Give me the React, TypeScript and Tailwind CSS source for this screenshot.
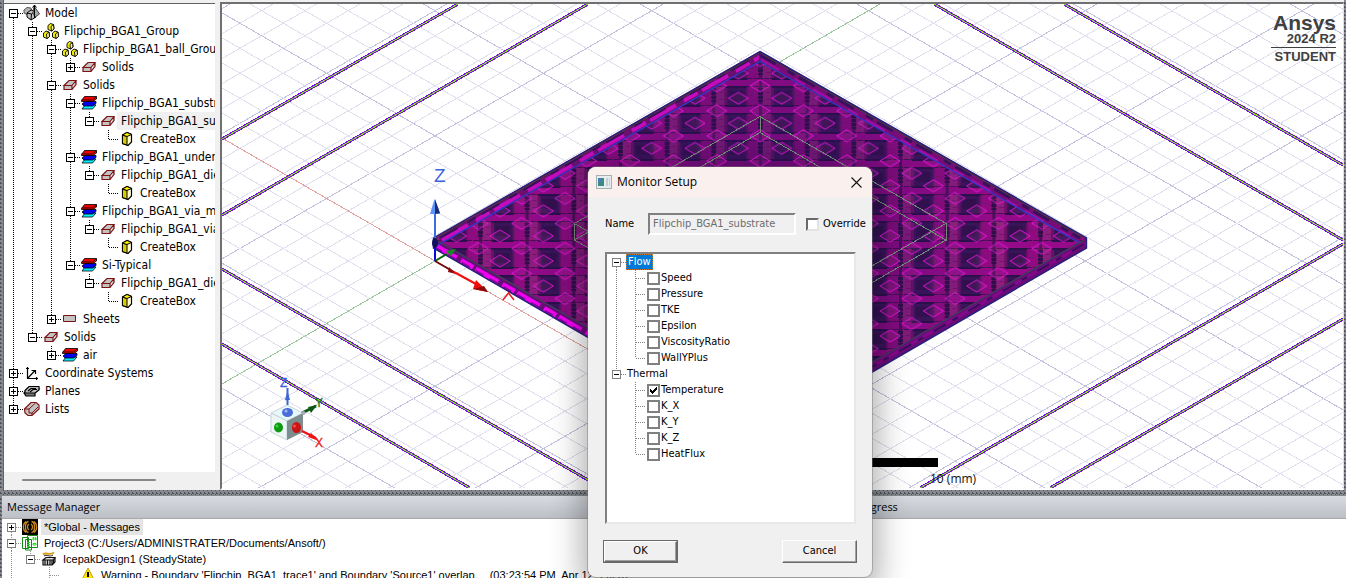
import React, { useId, useState } from "react";

type IconName =
  | "model" | "group" | "solid" | "material" | "box" | "sheet"
  | "axes" | "planes" | "lists" | "global" | "project" | "design" | "warning";

type TreeItem = {
  label: string;
  icon: IconName;
  open?: boolean;
  collapsed?: boolean;
  selected?: boolean;
  children?: TreeItem[];
};

const modelTree: TreeItem[] = [
  {
    label: "Model", icon: "model", open: true, children: [
      {
        label: "Flipchip_BGA1_Group", icon: "group", open: true, children: [
          {
            label: "Flipchip_BGA1_ball_Group", icon: "group", open: true, children: [
              { label: "Solids", icon: "solid", collapsed: true },
            ],
          },
          {
            label: "Solids", icon: "solid", open: true, children: [
              {
                label: "Flipchip_BGA1_substrate", icon: "material", open: true, children: [
                  {
                    label: "Flipchip_BGA1_substrate", icon: "solid", open: true, selected: true,
                    children: [{ label: "CreateBox", icon: "box" }],
                  },
                ],
              },
              {
                label: "Flipchip_BGA1_underfill", icon: "material", open: true, children: [
                  { label: "Flipchip_BGA1_die_underfill", icon: "solid", open: true, children: [{ label: "CreateBox", icon: "box" }] },
                ],
              },
              {
                label: "Flipchip_BGA1_via_material", icon: "material", open: true, children: [
                  { label: "Flipchip_BGA1_via", icon: "solid", open: true, children: [{ label: "CreateBox", icon: "box" }] },
                ],
              },
              {
                label: "Si-Typical", icon: "material", open: true, children: [
                  { label: "Flipchip_BGA1_die", icon: "solid", open: true, children: [{ label: "CreateBox", icon: "box" }] },
                ],
              },
            ],
          },
          { label: "Sheets", icon: "sheet", collapsed: true },
        ],
      },
      {
        label: "Solids", icon: "solid", open: true,
        children: [{ label: "air", icon: "material", collapsed: true }],
      },
    ],
  },
  { label: "Coordinate Systems", icon: "axes", collapsed: true },
  { label: "Planes", icon: "planes", collapsed: true },
  { label: "Lists", icon: "lists", collapsed: true },
];

const BoxGlyph = ({ x, y }: { x: number; y: number }) => (
  <g transform={`translate(${x} ${y})`} stroke="#000" strokeWidth="0.9" strokeLinejoin="round">
    <path d="M0.5 2.5 L3 0.5 L6 1.5 L6.5 6 L4 8 L0.5 6.5 Z" fill="#f4ec00" />
    <path d="M3.5 3.5 L6 1.5 L6.5 6 L4 8 Z" fill="#ffff9c" />
  </g>
);

function Icon({ name }: { name: IconName }) {
  const common = { width: 18, height: 16, viewBox: "0 0 18 16", "aria-hidden": true, className: "shrink-0" } as const;
  switch (name) {
    case "model":
      return (
        <svg {...common}>
          <path d="M1 5 L4 2.500 L8 3 L9 8 L5 10 L1 8 Z" fill="#b4b4b4" stroke="#555" />
          <path d="M4 8 L8 5 L12 6 L13 12 L8 15 L4 12 Z" fill="#c0c0c0" stroke="#000" />
          <path d="M4 8 L8.500 9 L12 6 M8.500 9 L8 15" fill="none" stroke="#000" />
          <path d="M11 1 L16.500 9 L12 12 L10 8 Z" fill="#aaa" stroke="#444" />
          <path d="M11.500 0 V13 M9.500 2.500 L11.500 0 L13.500 2.500" fill="none" stroke="#000" />
        </svg>
      );
    case "group":
      return (
        <svg {...common}>
          <BoxGlyph x={5.500} y={0} /><BoxGlyph x={1} y={7.500} /><BoxGlyph x={10} y={7.500} />
        </svg>
      );
    case "solid":
      return (
        <svg {...common}>
          <path d="M3 8.500 L8 3.500 H15 L11 8.500 Z M3 8.500 V12.500 H11 V8.500 M11 12.500 L15 7.500 V3.500" fill="#c3c3c3" stroke="#7c1212" strokeWidth="1.200" />
        </svg>
      );
    case "material":
      return (
        <svg {...common}>
          <path d="M2 14 L5 10 H16 L12.500 14 Z" fill="#00f0ff" stroke="#000" strokeWidth="0.800" />
          <path d="M2 9 L5 6.500 H16 V8.500 L12.500 11 H4 Z" fill="#0000f0" stroke="#000" strokeWidth="0.800" />
          <path d="M1.500 5.500 L4.500 1.500 H16.500 V4 L13 6.500 H1.500 Z" fill="#f00000" stroke="#000" strokeWidth="0.800" />
          <path d="M1.500 5 H12.500 L16.500 1.500" fill="none" stroke="#000" strokeWidth="0.800" />
        </svg>
      );
    case "box":
      return (
        <svg {...common}>
          <path d="M4.500 4 L9 1.500 L13.500 3.500 V11 L10 14.500 L4.500 12.500 Z" fill="#fffbd0" stroke="#000" strokeWidth="1.200" />
          <path d="M4.500 4 L9 5.500 V14 L4.500 12.500 Z" fill="#d8cc00" stroke="#000" />
          <path d="M4.500 4 L9 1.500 L13.500 3.500 L9 5.500 Z" fill="#fff200" stroke="#000" />
        </svg>
      );
    case "sheet":
      return <svg {...common}><path d="M2.500 4.500 H14.500 V10.500 H2.500 Z" fill="#c3c3c3" stroke="#7c1212" /></svg>;
    case "axes":
      return (
        <svg {...common}>
          <path d="M4.500 2 V13.500 H15 M4.500 13.500 L12 5.500 M3 3.500 H6 M13.500 12 V15 M8.500 5.500 H12.500 V9" fill="none" stroke="#000" strokeWidth="1.200" />
        </svg>
      );
    case "planes":
      return (
        <svg {...common} stroke="#000" strokeWidth="1.200">
          <path d="M1 10 L5 6 H16 L12 10 V13 H3 Z" fill="#777" />
          <path d="M2 7.500 L6 3.500 H16 V7 L12 10 H2 Z" fill="#bbb" />
          <path d="M5 8 L8 5.500 H13 M7 9 L10 6.500 H14" fill="none" />
        </svg>
      );
    case "lists":
      return (
        <svg {...common}>
          <path d="M1.500 8 L8 1.500 H13 L16 4 V8 L9 14.500 H5 L2 12 Z" fill="#c3c3c3" stroke="#7c1212" strokeWidth="1.200" />
          <path d="M2 8 H6 L12.500 2 M6 8 V12 H9 L15 6 M9 12 V14" fill="none" stroke="#7c1212" />
        </svg>
      );
    case "global":
      return (
        <svg {...common}>
          <rect x="1" width="16" height="16" fill="#000" />
          <g fill="none" stroke="#c98a1c" strokeWidth="1.300">
            <path d="M7.500 2.500 C3.500 3 3.500 13 7.500 13.500 M5 2.500 C1.500 5 1.500 11 5 13.500 M8 5 C6 6 6 10 8 11" />
            <path d="M10.500 2.500 C14.500 3 14.500 13 10.500 13.500 M13 2.500 C16.500 5 16.500 11 13 13.500 M10 5 C12 6 12 10 10 11" />
          </g>
        </svg>
      );
    case "project":
      return (
        <svg {...common} fill="#fff" stroke="#138a13">
          <path d="M6.500 0.500 H16.500 V12.500 H6.500 Z M1.500 2.500 H7.500 V13.500 H1.500 Z M4.500 4.500 H10.500 V15 H4.500 Z" />
          <path d="M12 2.500 H13 V5 H12 Z M14.500 2.500 H15 V5 H14.500 Z M12 8.500 H15 V10 H12 Z M6 7.500 H9 M6 9.500 H9 M6 11.500 H9" stroke="#16e016" />
        </svg>
      );
    case "design":
      return (
        <svg {...common} fill="none">
          <path d="M3 3.500 C6 0.500 9 5 14 1.500" stroke="#e09a10" strokeWidth="1.800" />
          <path d="M4 5 C7 3 9 6.500 13 4" stroke="#222" />
          <path d="M3 9 L6 6.500 H15 L13 9 Z M3 9 V14 H12 V9 M12 14 L15 11 V7 M5 9.500 V14 M7.500 9.500 V14 M10 9.500 V14 M13.500 9 V12" fill="#ddd" stroke="#111" strokeWidth="1.200" />
        </svg>
      );
    case "warning":
      return (
        <svg {...common}>
          <path d="M9 1 L16 14.500 H2 Z" fill="#ffe600" stroke="#c9a400" strokeLinejoin="round" />
          <path d="M9 5 V10 M9 11.500 V13.500" stroke="#000" strokeWidth="2" />
        </svg>
      );
  }
}

/** One 19px column of tree connector lines. */
function Connector({ kind, height, color = "#000" }: { kind: "blank" | "pass" | "tee" | "elbow"; height: number; color?: string }) {
  const mid = height / 2;
  return (
    <svg width="19" height={height} className="shrink-0" shapeRendering="crispEdges" aria-hidden="true">
      {kind !== "blank" && (
        <path
          d={
            kind === "pass"
              ? `M9.5 0 V${height}`
              : `M9.5 0 V${kind === "tee" ? height : mid} M10 ${mid + 0.5} H19`
          }
          stroke={color}
          strokeDasharray="1 1"
          fill="none"
        />
      )}
    </svg>
  );
}

function Expander({
  open, first, last, height, color = "#000", box = "#000", onToggle, name,
}: {
  open: boolean; first: boolean; last: boolean; height: number; color?: string; box?: string; onToggle?: () => void; name: string;
}) {
  const m = height / 2;
  return (
    <button type="button" onClick={onToggle} aria-expanded={open} aria-label={name} className="shrink-0">
      <svg width="19" height={height} shapeRendering="crispEdges" className="block" aria-hidden="true">
        <path
          d={`${first ? "" : `M9.5 0 V${m - 4}`} ${last ? "" : `M9.5 ${m + 5} V${height}`} M14 ${m + 0.5} H19`}
          stroke={color} strokeDasharray="1 1" fill="none"
        />
        <rect x="5.500" y={m - 3.5} width="8" height="8" fill="#fff" stroke={box} />
        <path d={`M7 ${m + 0.5} H12 ${open ? "" : `M9.5 ${m - 2} V${m + 3}`}`} stroke="#000" />
      </svg>
    </button>
  );
}

function TreeRows({ items, guides = [] }: { items: TreeItem[]; guides?: boolean[] }) {
  return (
    <ul>
      {items.map((item, i) => (
        <TreeNode key={i} item={item} guides={guides} first={i === 0 && guides.length === 0} last={i === items.length - 1} />
      ))}
    </ul>
  );
}

function TreeNode({ item, guides, first, last }: { item: TreeItem; guides: boolean[]; first: boolean; last: boolean }) {
  const [open, setOpen] = useState(!!item.open);
  return (
    <li>
      <div className="flex h-[18px] items-center whitespace-nowrap">
        {guides.map((on, i) => <Connector key={i} kind={on ? "pass" : "blank"} height={18} />)}
        {item.children || item.collapsed ? (
          <Expander open={open} first={first} last={last} height={18} name={item.label} onToggle={() => item.children && setOpen(!open)} />
        ) : (
          <Connector kind={last ? "elbow" : "tee"} height={18} />
        )}
        <Icon name={item.icon} />
        <span className={`grow pl-1 leading-[18px] ${item.selected ? "bg-[#f0f0f0]" : ""}`}>{item.label}</span>
      </div>
      {open && item.children && <TreeRows items={item.children} guides={[...guides, !last]} />}
    </li>
  );
}

/* ---------- 3D view ---------- */

const OX = 435;
const OY = 261;
const SLOPE = 0.5774;
const STEP = 25.03;

const gridLines = Array.from({ length: 81 }, (_, k) => k - 40).filter((k) => k !== 0);
const x0 = 200;
const x1 = 1360;

const airLines: [number, number, number, number][] = [
  [222, 139, 458, 4], [222, 215, 588, 4], [222, 269, 602, 488], [222, 344, 470, 488],
  [934, 4, 1343, 240], [1064, 4, 1343, 165], [1343, 244, 920, 488], [1343, 319, 1050, 488],
];

function Cuboid() {
  return (
    <g>
      <path d="M271 413 L287 405 L303 413 L287 421 Z" fill="#e6f8fb" stroke="#c4d4da" />
      <path d="M271 413 L287 421 V440 L271 432 Z" fill="#eef5f5" stroke="#c4d4da" />
      <path d="M303 413 L287 421 V440 L303 432 Z" fill="#7d8c8c" />
      <ellipse cx="278.500" cy="427.500" rx="4.500" ry="5" fill="#0b9a12" />
      <circle cx="277" cy="426" r="1.500" fill="#36d63c" />
      <ellipse cx="296.500" cy="427.500" rx="4.500" ry="5.500" fill="#cc1414" />
      <circle cx="294.500" cy="426" r="1.500" fill="#ff4a4a" />
      <ellipse cx="287.500" cy="412.500" rx="5.500" ry="4.500" fill="#4a6cd8" />
      <circle cx="286" cy="411" r="1.500" fill="#a5baf5" />
      <path d="M287.500 405 V388" stroke="#3c64d4" strokeWidth="2" />
      <path d="M285 400 L287.500 391 L290 400 Z" fill="#3c64d4" />
      <path d="M302 413 L316 406" stroke="#0a5a14" strokeWidth="3" />
      <path d="M308 407 L317 405 L311 413 Z" fill="#0a5a14" />
      <circle cx="303.500" cy="413" r="2" fill="#aab" />
      <path d="M302 431 L316 438" stroke="#f01414" strokeWidth="2.500" />
      <path d="M308 437 L319 441 L311 433 Z" fill="#f01414" />
    </g>
  );
}

function ModelView() {
  const id = useId().replace(/:/g, "");
  const top = "M434 238 L760 52 L1086 238 L760 426 Z";
  return (
    <svg viewBox="222 4 1121 484" preserveAspectRatio="xMidYMid slice" className="block h-full w-full" role="img" aria-label="Substrate model view">
      <defs>
        <pattern id={`${id}t`} x="758" y="78" width="46.670" height="27" patternUnits="userSpaceOnUse">
          <g shapeRendering="crispEdges">
            <rect width="47" height="27" fill="#8e0c80" />
            <rect x="5" y="9" width="8" height="18" fill="#8c1e7c" />
            <rect x="13" y="9" width="24" height="18" fill="#6c1068" />
            <rect x="16" y="9" width="19" height="18" fill="#3a1458" />
            <rect x="18" y="13" width="14" height="10" fill="#32104c" />
            <rect y="1" width="47" height="7" fill="#940a88" />
            <path d="M0 0.500 H47 M0 8.500 H47" stroke="#43104f" strokeDasharray="5 1" />
            <path d="M14 0.500 H36 M14 8.500 H36" stroke="#2a0f48" strokeWidth="2" />
            <path d="M2.500 0 V27" stroke="#4a1056" strokeWidth="3" />
            <path d="M2.500 10 V24" stroke="#300f48" strokeWidth="5" strokeDasharray="3 1" />
            <path d="M8 14 H12 M38 17 H42 M8 21 H13" stroke="#7a1070" />
          </g>
        </pattern>
        <pattern id={`${id}d`} x={OX} y={OY} width="43.340" height="25.030" patternUnits="userSpaceOnUse">
          <g fill="#c850a0" fillOpacity="0.100" stroke="#ec14de" strokeWidth="0.900">
            <path d="M11.670 0 L21.670 -6 L31.670 0 L21.670 6 Z M11.670 25 L21.670 19 L31.670 25 L21.670 31 Z" />
            <path d="M0 6.500 L10 12.500 L0 18.500 M43.340 6.500 L33.340 12.500 L43.340 18.500" />
          </g>
        </pattern>
        <radialGradient id={`${id}f`} gradientUnits="userSpaceOnUse" cx="760" cy="240" r="240">
          <stop offset="0.200" stopColor="#301060" stopOpacity="0.450" />
          <stop offset="1" stopColor="#301060" stopOpacity="0" />
        </radialGradient>
      </defs>
      <rect x={x0} y="-50" width={x1 - x0} height="600" fill="#fff" />

      <g shapeRendering="crispEdges" fill="none">
        {gridLines.map((k) => {
          const stroke = k % 5 === 0 ? "#c2c2de" : "#e0e0ee";
          const yc = OY + k * STEP;
          return (
            <path
              key={k}
              stroke={stroke}
              d={`M${x0} ${yc + (x0 - OX) * SLOPE} L${x1} ${yc + (x1 - OX) * SLOPE} M${x0} ${yc - (x0 - OX) * SLOPE} L${x1} ${yc - (x1 - OX) * SLOPE}`}
            />
          );
        })}
        <path d={`M222 ${OY - (OX - 222) * SLOPE} L${x1} ${OY + (x1 - OX) * SLOPE}`} stroke="#e0a0a0" />
        <path d={`M${x0} ${OY + (OX - x0) * SLOPE} L${x1} ${OY - (x1 - OX) * SLOPE}`} stroke="#9cc49c" />
      </g>

      <g shapeRendering="crispEdges">
        {airLines.map(([a, b, c, d], i) => (
          <g key={i}>
            <path d={`M${a} ${b} L${c} ${d}`} stroke="#7c0ce8" strokeWidth="3" />
            <path d={`M${a} ${b} L${c} ${d}`} stroke="#7ce410" strokeWidth="1" />
          </g>
        ))}
      </g>

      {/* substrate */}
      <path d="M433 238 L760 51 L1087 238 V248 L760 437 L433 248 Z" fill="#6a0c78" />
      <path d="M434 245 L760 433" stroke="#f000f0" strokeWidth="5" strokeDasharray="26 5 14 3" />
      <path d="M434 247 L760 435" stroke="#7a0c90" strokeWidth="2" strokeDasharray="9 7" />
      <path d="M1086 243 L760 431" stroke="#84088a" strokeWidth="3" />
      <path d="M1084 244 L760 432" stroke="#34105a" strokeWidth="2" strokeDasharray="14 12 6 8" />
      <path d={top} fill={`url(#${id}t)`} />
      <path d={top} fill={`url(#${id}f)`} />
      <path d={top} fill={`url(#${id}d)`} />
      <path d="M440 240 L760 57" fill="none" stroke="#6c1070" strokeWidth="7" />
      <path d="M442 240 L760 57" fill="none" stroke="#c40cbc" strokeWidth="4" strokeDasharray="30 9 16 5" />
      <path d="M440 238 L760 54" fill="none" stroke="#38105c" strokeWidth="2" strokeDasharray="20 12 9 7" />
      <path d="M760 57 L1080 240" fill="none" stroke="#780c78" strokeWidth="7" />
      <path d="M760 55 L1080 238" fill="none" stroke="#38105c" strokeWidth="3" strokeDasharray="18 14 8 5" />
      <path d="M760 59 L1078 241" fill="none" stroke="#a80ca4" strokeWidth="2" strokeDasharray="22 18 12 9" />
      <path d="M438 245 L760 61.500 L1080 243" fill="none" stroke="#2c3cd0" strokeWidth="1.200" />
      <path d="M433.500 238 L760 51.500 L1086.500 238 V248 L760 437 L433.500 248 Z" fill="none" stroke="#26207c" strokeWidth="1.400" />
      <path d="M436 240 L760 427 L1084 240" fill="none" stroke="#3a4458" strokeWidth="1.200" />
      <path d="M436 238 L760 53 L1084 238" fill="none" stroke="#4c3c3c" strokeWidth="1" />
      <path d="M760 51 V61" stroke="#26207c" />
      <g fill="none" stroke="#748878" shapeRendering="crispEdges">
        <path d="M760 116.500 L574.500 223.500 V240 L760 132.500 L946 240 V223.500 Z M760.500 116.500 V132.500" />
        <path d="M574.500 240 L760 347 L946 240 M574.500 223.500 L760 330 L946 223.500" />
      </g>

      {/* coordinate axes */}
      <path d="M435 261 V244" stroke="#0808e0" strokeWidth="2" />
      <path d="M435 244 V212" stroke="#3c6ce0" strokeWidth="2" />
      <path d="M430 214 L434.500 199 L440 214 Z" fill="#5a94f8" />
      <path d="M435 214 V199 L440 213 Z" fill="#1c2c74" />
      <ellipse cx="435" cy="243" rx="3" ry="5" fill="#101060" />
      <path d="M435 261 L447 254" stroke="#086010" strokeWidth="2" />
      <path d="M446 251 L456 249 L451 256 Z" fill="#10901c" />
      <path d="M435 261 L454 272" stroke="#700808" strokeWidth="2" />
      <path d="M449 267 L456 274 L448 272 Z" fill="#900808" />
      <path d="M454 272 L476 284" stroke="#f01010" strokeWidth="2" />
      <path d="M476 280 L488 292 L473 289 Z" fill="#f00c0c" />
      <path d="M484 286 L488 292 L473 289 Z" fill="#900808" />
      <g fontFamily="'Liberation Sans', Arial, sans-serif">
        <text x="434" y="182" fontSize="19" fill="#3c64dc">Z</text>
        <path d="M503 300 L508.500 293 L514 300" fill="none" stroke="#f01414" strokeWidth="1.400" />
        <Cuboid />
        <g fontSize="12">
          <text x="280" y="387" fill="#3c64dc" stroke="#3c64dc" strokeWidth="0.300">Z</text>
          <text x="315" y="407" fill="#108018" stroke="#108018" strokeWidth="0.300">Y</text>
          <text x="315" y="447" fill="#f01414" stroke="#f01414" strokeWidth="0.300">X</text>
        </g>
      </g>

      <rect x="740" y="458" width="198" height="9" fill="#000" />
      <text x="930" y="483" fontSize="12" fontFamily="'Open Sans', 'Noto Sans', sans-serif" fill="#111">10 (mm)</text>
    </svg>
  );
}

/* ---------- dialog ---------- */

function Tick({ id, checked, onChange, sunken }: { id: string; checked: boolean; onChange: () => void; sunken?: boolean }) {
  return (
    <span className="grid size-[13px] shrink-0 place-items-center">
      <input
        id={id}
        type="checkbox"
        checked={checked}
        onChange={onChange}
        className={`col-start-1 row-start-1 size-[13px] appearance-none border-2 bg-white ${
          sunken ? "border-t-[#696969] border-l-[#696969] border-r-[#e3e3e3] border-b-[#e3e3e3]" : "border-[#808080]"
        }`}
      />
      {checked && (
        <svg width="7" height="7" viewBox="0 0 7 7" className="pointer-events-none col-start-1 row-start-1" shapeRendering="crispEdges" aria-hidden="true">
          <path d="M0 2 H1 V3 H2 V4 H3 V3 H4 V2 H5 V1 H6 V0 H7 V3 H6 V4 H5 V5 H4 V6 H3 V7 H2 V6 H1 V5 H0 Z" fill="#000" />
        </svg>
      )}
    </span>
  );
}

const monitorGroups = [
  { name: "Flow", items: ["Speed", "Pressure", "TKE", "Epsilon", "ViscosityRatio", "WallYPlus"] },
  { name: "Thermal", items: ["Temperature", "K_X", "K_Y", "K_Z", "HeatFlux"] },
];

function MonitorDialog() {
  const [checked, setChecked] = useState<Record<string, boolean>>({ Temperature: true });
  const [override, setOverride] = useState(false);
  const raised = "border border-t-white border-l-white border-r-[#696969] border-b-[#696969] shadow-[inset_-1px_-1px_0_#a0a0a0]";
  return (
    <section
      role="dialog"
      aria-labelledby="dialog-title"
      className="absolute top-[167px] left-[588px] flex w-[284px] flex-col overflow-hidden rounded-lg bg-[#f0f0f0] font-['DejaVu_Sans_Condensed','Noto_Sans',sans-serif] text-[11px] text-black shadow-[0_0_0_1px_rgba(120,120,120,0.45),0_12px_32px_6px_rgba(0,0,0,0.32)]"
    >
      <header className="flex h-[30px] items-center bg-[#faf1ee] pr-2 pl-2">
        <svg width="16" height="14" viewBox="0 0 16 14" aria-hidden="true">
          <rect x="0.500" y="0.500" width="15" height="13" fill="#e8eef0" stroke="#a4b0b4" />
          <path d="M2 3 H8 V11 H2 Z" fill="#3c8a84" />
          <path d="M2 3 H5 V7 H2 Z" fill="#4a80b0" />
          <path d="M10 3 H12 V11 H10 Z M13 3 H14 V11 H13 Z" fill="#c4d0d0" />
        </svg>
        <h2 id="dialog-title" className="grow pl-[5px] font-['Open_Sans','Noto_Sans',sans-serif] text-xs">Monitor Setup</h2>
        <button type="button" aria-label="Close" className="p-[2px]">
          <svg width="11" height="11" viewBox="0 0 11 11" className="block" aria-hidden="true">
            <path d="M0.500 0.500 L10.500 10.500 M10.500 0.500 L0.500 10.500" stroke="#111" strokeWidth="1.100" />
          </svg>
        </button>
      </header>
      <div className="flex items-center pt-4 pl-[17px]">
        <label htmlFor="monitor-name" className="w-[43px] shrink-0">Name</label>
        <input
          id="monitor-name"
          readOnly
          value="Flipchip_BGA1_substrate"
          className="h-[22px] w-[148px] shrink-0 border-2 border-t-[#808080] border-r-white border-b-white border-l-[#808080] bg-[#f0f0f0] px-[3px] pb-[2px] text-[#6d6d6d] outline-none"
        />
        <span className="ml-[10px] flex items-center gap-1">
          <Tick id="override" sunken checked={override} onChange={() => setOverride(!override)} />
          <label htmlFor="override">Override</label>
        </span>
      </div>
      <div className="mt-[17px] mr-4 ml-[17px] h-[272px] border-2 border-t-[#808080] border-r-[#e8e8e8] border-b-[#e8e8e8] border-l-[#808080] bg-white">
        {monitorGroups.map((g, gi) => (
          <div key={g.name}>
            <div className="flex h-4 items-center">
              <Expander open first={gi === 0} last={gi === monitorGroups.length - 1} height={16} color="#808080" box="#808080" name={g.name} />
              <span className={gi === 0 ? "bg-[#0078d7] px-[2px] leading-4 text-white outline-1 -outline-offset-1 outline-[#c87828] outline-dotted" : "px-px leading-4"}>
                {g.name}
              </span>
            </div>
            {g.items.map((item, i) => (
              <div key={item} className="flex h-4 items-center">
                <Connector kind={gi === 0 ? "pass" : "blank"} height={16} color="#808080" />
                <Connector kind={i === g.items.length - 1 ? "elbow" : "tee"} height={16} color="#808080" />
                <span className="ml-[2px] flex items-center gap-px">
                  <Tick id={`m-${item}`} checked={!!checked[item]} onChange={() => setChecked({ ...checked, [item]: !checked[item] })} />
                  <label htmlFor={`m-${item}`} className="leading-4">{item}</label>
                </span>
              </div>
            ))}
          </div>
        ))}
      </div>
      <footer className="flex justify-between pt-4 pr-[15px] pb-[14px] pl-[15px]">
        <span className="border border-[#696969]">
          <button type="button" className={`h-[21px] w-[73px] ${raised}`}>OK</button>
        </span>
        <button type="button" className={`h-[23px] w-[75px] ${raised}`}>Cancel</button>
      </footer>
    </section>
  );
}

const hatch =
  "bg-[#868a8e] bg-[linear-gradient(45deg,#50545c_25%,transparent_25%,transparent_75%,#50545c_75%)] bg-[length:4px_4px]";

const panelTitle =
  "h-[23px] border-b border-[#a8a8a8] bg-linear-to-b from-[#d8dbe0] to-[#bcc0c6] font-['Open_Sans','Noto_Sans',sans-serif] text-[11px] leading-[22px]";

export default function App() {
  return (
    <div className="relative flex h-screen flex-col overflow-hidden bg-[#f0f0f0] font-['DejaVu_Sans_Condensed','Noto_Sans',sans-serif] text-xs text-black">
      <div className="flex min-h-0 grow">
        <div className={`w-1 shrink-0 border-r border-[#606468] ${hatch}`} />
        <nav aria-label="Model tree" className="mt-[3px] flex w-[211px] shrink-0 flex-col overflow-hidden border-t border-[#606468] bg-white">
          <div className="grow overflow-hidden">
            <TreeRows items={modelTree} />
          </div>
          <div className="h-[18px] shrink-0 bg-[#f0f0f0] px-[18px] pt-[7px]">
            <div className="h-[2px] w-[134px] rounded-full bg-[#868686]" />
          </div>
        </nav>
        <main className="relative mt-[2px] ml-[5px] min-w-0 grow border-t-2 border-r border-b-2 border-l-2 border-t-[#707070] border-r-[#e0e0e0] border-b-white border-l-[#707070]">
          <ModelView />
          <div className="absolute top-[7px] right-[7px] flex flex-col items-end font-['Liberation_Sans',sans-serif] font-bold text-[#404040]">
            <span className="text-[21px] leading-6">Ansys</span>
            <span className="-mt-1 border-b border-[#404040] pl-4 text-[13px] leading-4">2024 R2</span>
            <span className="pt-px text-[13px] leading-4">STUDENT</span>
          </div>
        </main>
        <div className={`w-[2px] shrink-0 ${hatch}`} />
      </div>
      <div className={`h-[6px] shrink-0 ${hatch}`} />
      <div className="flex h-[82px] shrink-0">
        <div className={`w-[2px] shrink-0 ${hatch}`} />
        <section className="w-[800px] shrink-0 overflow-hidden bg-white">
          <h2 className={`pl-[5px] ${panelTitle}`}>Message Manager</h2>
          <ul className="font-['Liberation_Sans',sans-serif] text-[11px] whitespace-nowrap">
            <li className="flex h-4 items-center">
              <Expander open={false} first last={false} height={16} color="#909090" box="#808080" name="Global - Messages" />
              <Icon name="global" />
              <span className="ml-[2px] bg-[#e4e4e4] px-[3px] leading-4">*Global - Messages</span>
            </li>
            <li className="flex h-4 items-center">
              <Expander open first={false} last={false} height={16} color="#909090" box="#808080" name="Project3" />
              <Icon name="project" />
              <span className="ml-[2px] px-[3px] leading-4">Project3 (C:/Users/ADMINISTRATER/Documents/Ansoft/)</span>
            </li>
            <li className="flex h-4 items-center">
              <Connector kind="pass" height={16} color="#909090" />
              <Expander open first={false} last height={16} color="#909090" box="#808080" name="IcepakDesign1" />
              <Icon name="design" />
              <span className="ml-[2px] px-[3px] leading-4">IcepakDesign1 (SteadyState)</span>
            </li>
            <li className="flex h-4 items-center">
              <Connector kind="pass" height={16} color="#909090" />
              <Connector kind="blank" height={16} />
              <Connector kind="tee" height={16} color="#909090" />
              <span className="ml-5 flex items-center">
                <Icon name="warning" />
                <span className="ml-px px-[3px] leading-4">
                  Warning - Boundary 'Flipchip_BGA1_trace1' and Boundary 'Source1' overlap.
                  <time className="pl-3">(03:23:54 PM&nbsp; Apr 12, 2025)</time>
                </span>
              </span>
            </li>
          </ul>
        </section>
        <section className="grow bg-white">
          <h2 className={`pl-[51px] ${panelTitle}`}>Progress</h2>
        </section>
      </div>
      <MonitorDialog />
    </div>
  );
}
